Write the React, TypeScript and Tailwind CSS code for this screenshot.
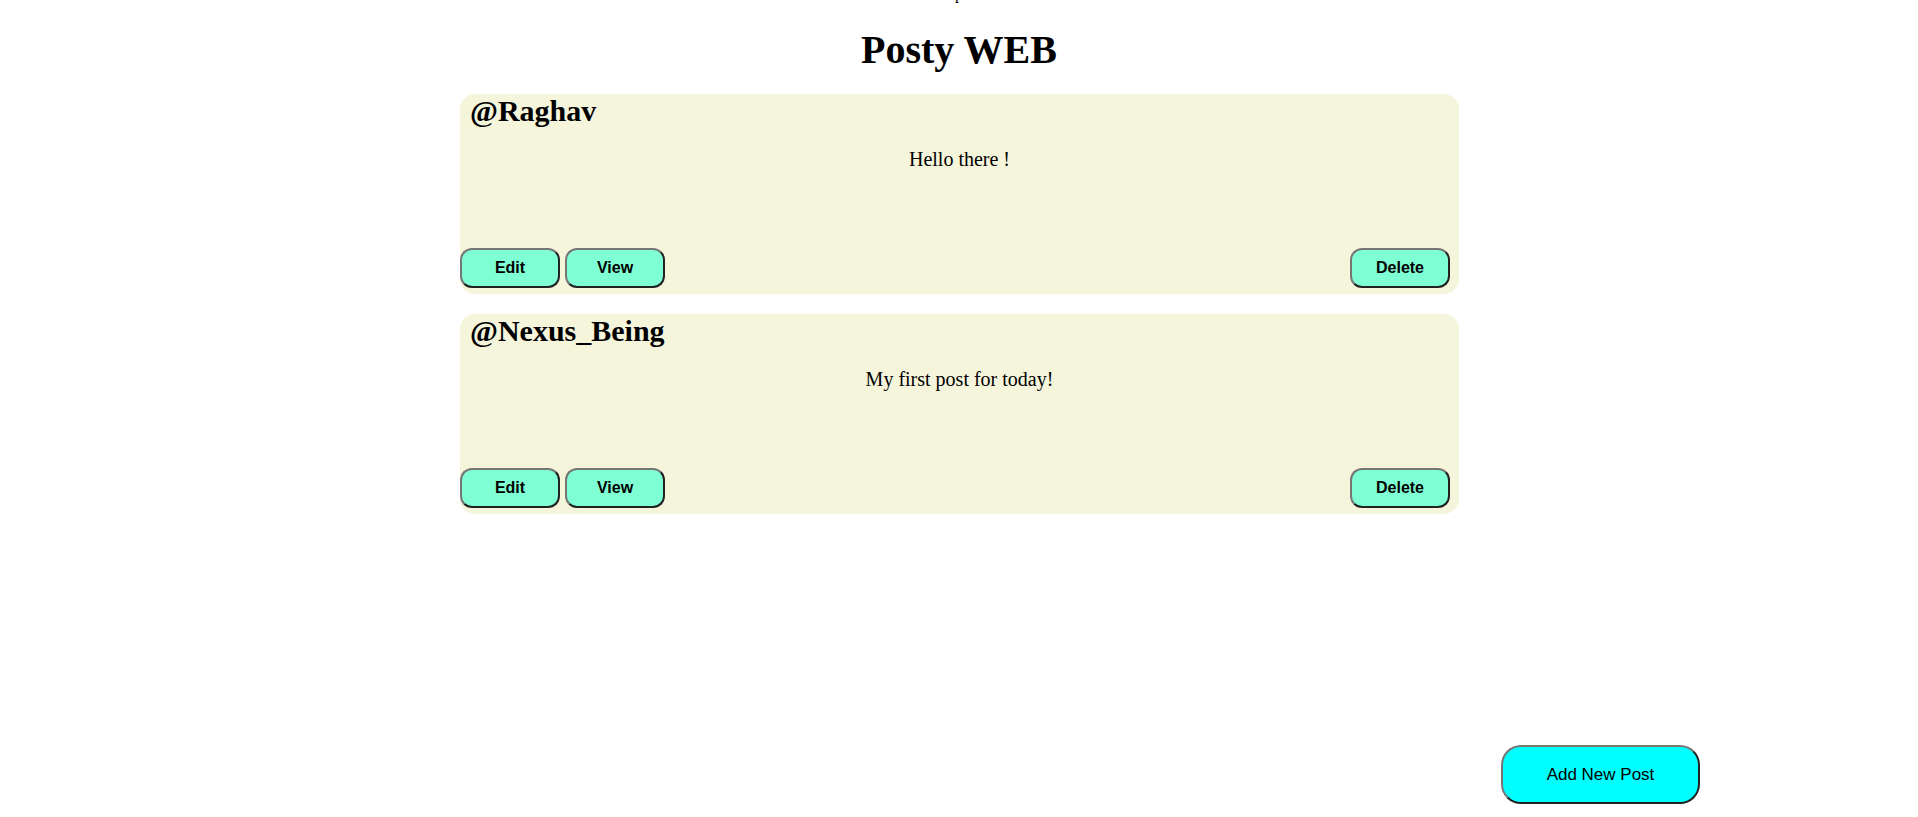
const posts = [
  { user: '@Raghav', body: 'Hello there !' },
  { user: '@Nexus_Being', body: 'My first post for today!' },
];

function PostButton({ label }: { label: string }) {
  return (
    <button className="w-[100px] h-[40px] rounded-[12px] bg-[#7fffd4] border-2 [border-style:outset] border-[#767676] font-['Liberation_Sans',Arial,sans-serif] font-bold text-[16px] text-black">
      {label}
    </button>
  );
}

export default function App() {
  return (
    <div className="min-h-[817px] bg-white font-['Liberation_Serif','Times_New_Roman',serif] text-black">
      <p className="-mt-[15px] h-[18px] text-center text-[16px] leading-[18px]">p</p>

      <h1 className="mt-[24px] text-center text-[40px] leading-[46px] font-bold">Posty WEB</h1>

      <div className="mt-[21px] flex flex-col gap-[20px]">
        {posts.map((post) => (
          <div
            key={post.user}
            className="ml-[460px] w-[999px] h-[200px] rounded-[15px] bg-[#f5f5dc] flex flex-col"
          >
            <h2 className="px-[10px] text-[30px] leading-[34px] font-bold">{post.user}</h2>
            <p className="mt-[20px] text-center text-[20px] leading-[23px]">{post.body}</p>
            <div className="mt-auto mb-[6px] flex items-center">
              <div className="flex gap-[5px]">
                <PostButton label="Edit" />
                <PostButton label="View" />
              </div>
              <div className="ml-auto mr-[9px]">
                <PostButton label="Delete" />
              </div>
            </div>
          </div>
        ))}
      </div>

      <button className="fixed left-[1501px] top-[745px] w-[199px] h-[59px] rounded-[20px] bg-[#00ffff] border-2 [border-style:outset] border-[#767676] font-['Liberation_Sans',Arial,sans-serif] text-[17px] text-black">
        Add New Post
      </button>
    </div>
  );
}
